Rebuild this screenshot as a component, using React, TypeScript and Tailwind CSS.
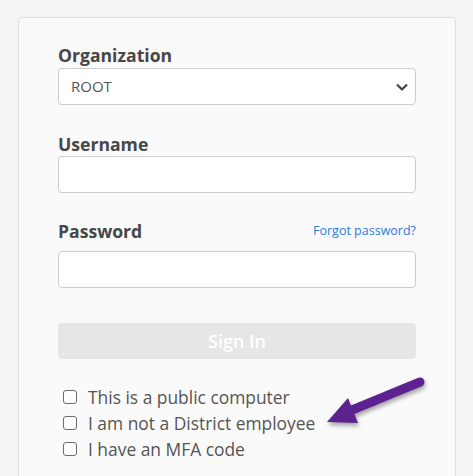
import React from 'react';

const font = { fontFamily: '"Open Sans", "Liberation Sans", sans-serif' };

function Check({ label }: { label: string }) {
  return (
    <label className="flex h-[26px] items-center gap-[11px]">
      <span className="ml-[5px] block h-[14px] w-[14px] rounded-[3px] border-[1.5px] border-[#6b6b6b] bg-white" />
      <span className="text-[17.4px] text-[#555]">{label}</span>
    </label>
  );
}

export default function App() {
  return (
    <div className="relative h-[476px] w-[473px] overflow-hidden bg-[#f4f4f4]" style={font}>
      <div className="ml-[18px] mt-[17px] w-[438px] rounded-[4px] border border-[#dedede] bg-[#fafafa] px-[39px] pb-10 pt-[25px]">
        <div className="text-[17.6px] font-bold leading-[24px] text-[#474747]">Organization</div>
        <div className="mt-[1px] flex h-[37px] items-center justify-between rounded-[4px] border border-[#cccccc] bg-white pl-[12px] pr-[6px]">
          <span className="text-[15px] text-[#555]">ROOT</span>
          <svg width="14" height="10" viewBox="0 0 14 10">
            <path d="M2 2.5 L7 7.5 L12 2.5" fill="none" stroke="#444" strokeWidth="2.2" />
          </svg>
        </div>

        <div className="mt-[27px] text-[17.6px] font-bold leading-[24px] text-[#474747]">Username</div>
        <div className="h-[37px] rounded-[4px] border border-[#cccccc] bg-white" />

        <div className="mt-[26px] flex items-center justify-between">
          <span className="text-[17.6px] font-bold leading-[24px] text-[#474747]">Password</span>
          <a className="text-[12.5px] text-[#2b7de0]">Forgot password?</a>
        </div>
        <div className="mt-[8px] h-[37px] rounded-[4px] border border-[#cccccc] bg-white" />

        <button className="mt-[35px] flex h-[36px] w-full items-center justify-center rounded-[4px] bg-[#e6e6e6] text-[18px] font-semibold text-white">
          Sign In
        </button>

        <div className="mt-[25px] flex flex-col">
          <Check label="This is a public computer" />
          <Check label="I am not a District employee" />
          <Check label="I have an MFA code" />
        </div>
      </div>

      <svg
        className="absolute left-[320px] top-[372px]"
        width="110"
        height="60"
        viewBox="0 0 110 60"
        style={{ filter: 'drop-shadow(1px 3px 2px rgba(0,0,0,0.35))' }}
      >
        <line x1="100" y1="10" x2="32" y2="38" stroke="#5e2290" strokeWidth="9" strokeLinecap="round" />
        <polygon points="7,50 28,26 38,51" fill="#5e2290" />
      </svg>
    </div>
  );
}
